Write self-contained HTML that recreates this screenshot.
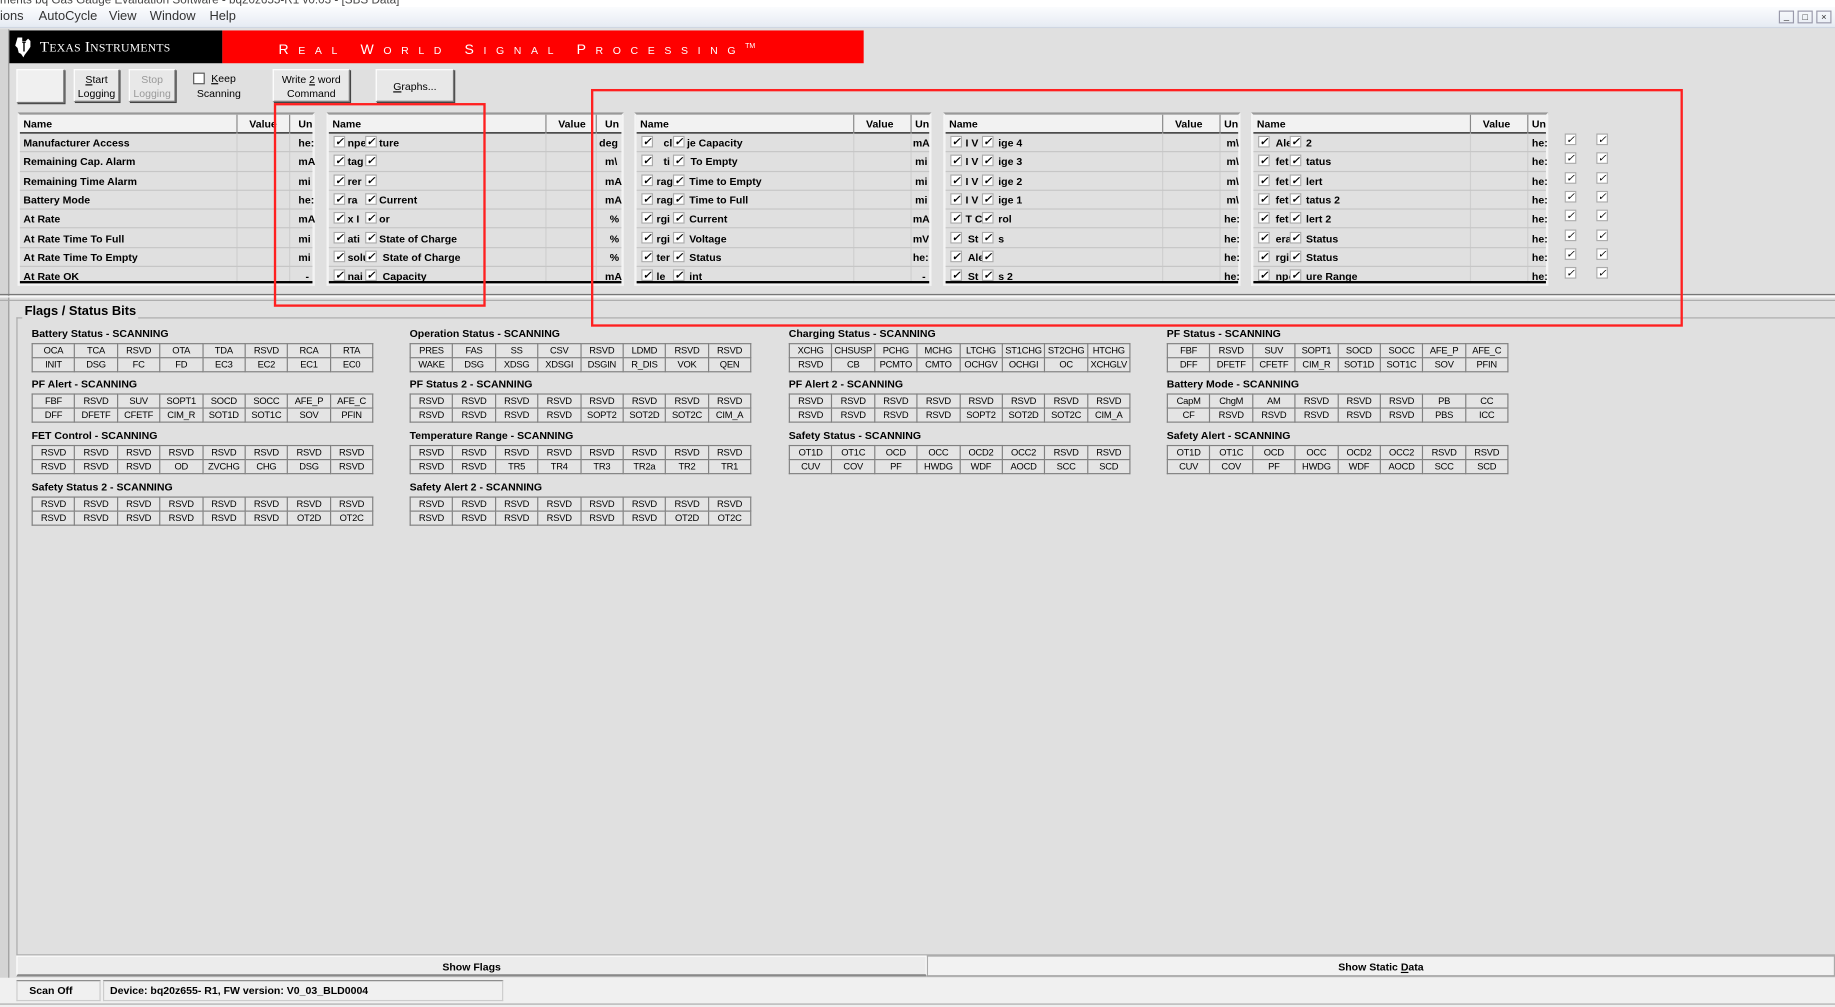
<!DOCTYPE html>
<html><head><meta charset="utf-8"><style>
*{box-sizing:border-box;margin:0;padding:0}
body{width:1835px;height:1007px;overflow:hidden;background:#e0e0e0;font-family:"Liberation Sans",sans-serif}
#s{position:absolute;left:0;top:0;width:1568px;height:860px;transform:scale(1.17028,1.17093);transform-origin:0 0;background:#e0e0e0}
.a{position:absolute}
.menu{left:0;top:6px;width:1568px;height:18px;background:linear-gradient(#fbfcfe,#e6ebf3);font-size:11px;color:#333;border-bottom:1px solid #cfd6e2}
.menu span{position:absolute;top:2px}
.btn{position:absolute;background:#e8e8e8;border:1px solid #fff;border-right-color:#777;border-bottom-color:#777;box-shadow:1px 1px 0 #444;font-size:9px;text-align:center;line-height:12px;color:#000}
.tbl{position:absolute;top:96px;width:254px;height:148px;border:2px solid #f4f4f4;border-top-color:#999;background:#e0e0e0}
.tbl .h{position:absolute;left:0;top:0;height:16px;width:100%;background:#f2f2f2;border-bottom:1px solid #000;font-size:9px;font-weight:bold}
.tbl .h span{position:absolute;top:3px}
.tbl .h i{position:absolute;top:0;width:1px;height:16px;background:#888}
.r{position:absolute;left:0;width:100%;height:16.3px;border-bottom:1px solid #c6c6c6;font-size:9px;font-weight:bold;line-height:16px;white-space:nowrap}
.r span{position:absolute}
.bot{position:absolute;left:0;bottom:0;width:100%;height:2px;background:#000}
.cb{position:absolute;width:10px;height:10px;background:#fff;border:1px solid #aaa;top:2px;font-size:9px;line-height:8px;text-align:center;color:#000}
.vl{position:absolute;top:16px;width:1px;height:128px;background:#cfcfcf}
.fg{position:absolute;font-size:9px;font-weight:bold}
.fg .t{height:13px}
.fg table{border-collapse:collapse;margin-top:0}
.fg td{border:1px solid #808080;width:36.4px;height:12px;font-size:8px;font-weight:normal;text-align:center;line-height:10px;padding:0;background:#e4e4e4;letter-spacing:-.2px}
</style></head><body><div id="s">
<div class="a" style="left:0;top:0;width:1568px;height:6px;background:#fff;overflow:hidden;font-size:10px;line-height:2px;color:#444">ments bq Gas Gauge Evaluation Software - bq20z655-R1 v0.03 - [SBS Data]</div>
<div class="a menu"><span style="left:0">ions</span><span style="left:33px">AutoCycle</span><span style="left:93px">View</span><span style="left:128px">Window</span><span style="left:179px">Help</span>
<span style="left:1520px;top:3px;width:13px;height:11px;border:1px solid #99a;font-size:8px;line-height:8px;text-align:center">_</span><span style="left:1536px;top:3px;width:13px;height:11px;border:1px solid #99a;font-size:8px;line-height:9px;text-align:center">□</span><span style="left:1552px;top:3px;width:13px;height:11px;border:1px solid #99a;font-size:8px;line-height:9px;text-align:center">×</span></div>
<div class="a" style="left:0;top:25px;width:8px;height:835px;background:#d4d4d4;border-right:1px solid #999"></div>
<div class="a" style="left:8px;top:26px;width:182px;height:28px;background:#000;color:#fff;font-family:'Liberation Serif',serif;font-size:13px;line-height:28px;padding-left:26px;letter-spacing:.2px">T<span style="font-size:10px">EXAS</span> I<span style="font-size:10px">NSTRUMENTS</span></div>
<svg class="a" style="left:12px;top:30px" width="16" height="20" viewBox="0 0 16 20"><path d="M3 2h4v3h3l2-2 2 2v5l-2 3-3 4-1 2-2-3-2-1-1-4-2-2z" fill="#fff"/><path d="M7 6h3M8.5 6v8" stroke="#000" stroke-width="1.2"/></svg>
<div class="a" style="left:190px;top:26px;width:548px;height:28px;background:#ff0000;color:#fff;font-size:12px;line-height:28px;padding-left:48px;letter-spacing:8.2px;white-space:nowrap">R<span style="font-size:9px">EAL</span> W<span style="font-size:9px">ORLD</span> S<span style="font-size:9px">IGNAL</span> P<span style="font-size:9px">ROCESSING</span><sup style="font-size:6px;letter-spacing:0">TM</sup></div>
<div class="btn" style="left:14px;top:59px;width:41px;height:29px;background:#f0f0f0"></div>
<div class="btn" style="left:63px;top:59px;width:39px;height:28px;padding-top:2px"><u>S</u>tart<br>Logging</div>
<div class="btn" style="left:110px;top:59px;width:40px;height:28px;padding-top:2px;color:#999">Stop<br>Logging</div>
<div class="a" style="left:165px;top:62px;width:10px;height:10px;background:#fff;border:1px solid #555"></div>
<div class="a" style="left:166px;top:61px;width:40px;font-size:9px;line-height:13px;text-align:center;padding-left:10px"><u>K</u>eep<br><span style="margin-left:-8px">Scanning</span></div>
<div class="btn" style="left:233px;top:59px;width:66px;height:28px;padding-top:2px">Write <u>2</u> word<br>Command</div>
<div class="btn" style="left:321px;top:59px;width:67px;height:28px;line-height:28px"><u>G</u>raphs...</div>

<!-- table 1 -->
<div class="tbl" style="left:15px"><div class="h"><span style="left:3px">Name</span><i style="left:185px"></i><span style="left:196px">Value</span><i style="left:230px"></i><span style="left:238px">Un</span></div>
<div class="vl" style="left:185px"></div><div class="vl" style="left:230px"></div>
<div class="r" style="top:16px"><span style="left:3px">Manufacturer Access</span><span style="left:238px">he:</span></div>
<div class="r" style="top:32.3px"><span style="left:3px">Remaining Cap. Alarm</span><span style="left:238px">mA</span></div>
<div class="r" style="top:48.6px"><span style="left:3px">Remaining Time Alarm</span><span style="left:238px">mi</span></div>
<div class="r" style="top:64.9px"><span style="left:3px">Battery Mode</span><span style="left:238px">he:</span></div>
<div class="r" style="top:81.2px"><span style="left:3px">At Rate</span><span style="left:238px">mA</span></div>
<div class="r" style="top:97.5px"><span style="left:3px">At Rate Time To Full</span><span style="left:238px">mi</span></div>
<div class="r" style="top:113.8px"><span style="left:3px">At Rate Time To Empty</span><span style="left:238px">mi</span></div>
<div class="r" style="top:130.1px;border:0"><span style="left:3px">At Rate OK</span><span style="left:244px">-</span></div>
<div class="bot"></div></div>

<!-- table 2 -->
<div class="tbl" style="left:279px"><div class="h"><span style="left:3px">Name</span><i style="left:185px"></i><span style="left:196px">Value</span><i style="left:228px"></i><span style="left:236px">Un</span></div>
<div class="vl" style="left:185px"></div><div class="vl" style="left:228px"></div>
<div class="r" style="top:16px"><i class="cb" style="left:4px">✓</i><span style="left:16px">npe</span><i class="cb" style="left:31px">✓</i><span style="left:43px">ture</span><span style="left:231px">deg</span></div>
<div class="r" style="top:32.3px"><i class="cb" style="left:4px">✓</i><span style="left:16px">tag</span><i class="cb" style="left:31px">✓</i><span style="left:236px">m\</span></div>
<div class="r" style="top:48.6px"><i class="cb" style="left:4px">✓</i><span style="left:16px">rer</span><i class="cb" style="left:31px">✓</i><span style="left:236px">mA</span></div>
<div class="r" style="top:64.9px"><i class="cb" style="left:4px">✓</i><span style="left:16px">ra</span><i class="cb" style="left:31px">✓</i><span style="left:43px">Current</span><span style="left:236px">mA</span></div>
<div class="r" style="top:81.2px"><i class="cb" style="left:4px">✓</i><span style="left:16px">x I</span><i class="cb" style="left:31px">✓</i><span style="left:43px">or</span><span style="left:240px">%</span></div>
<div class="r" style="top:97.5px"><i class="cb" style="left:4px">✓</i><span style="left:16px">ati</span><i class="cb" style="left:31px">✓</i><span style="left:43px">State of Charge</span><span style="left:240px">%</span></div>
<div class="r" style="top:113.8px"><i class="cb" style="left:4px">✓</i><span style="left:16px">solu</span><i class="cb" style="left:31px">✓</i><span style="left:46px">State of Charge</span><span style="left:240px">%</span></div>
<div class="r" style="top:130.1px;border:0"><i class="cb" style="left:4px">✓</i><span style="left:16px">nai</span><i class="cb" style="left:31px">✓</i><span style="left:46px">Capacity</span><span style="left:236px">mA</span></div>
<div class="bot"></div></div>

<!-- table 3 -->
<div class="tbl" style="left:542px"><div class="h"><span style="left:3px">Name</span><i style="left:185px"></i><span style="left:196px">Value</span><i style="left:234px"></i><span style="left:238px">Un</span></div>
<div class="vl" style="left:185px"></div><div class="vl" style="left:234px"></div>
<div class="r" style="top:16px"><i class="cb" style="left:4px">✓</i><span style="left:23px">cl</span><i class="cb" style="left:31px">✓</i><span style="left:43px">je Capacity</span><span style="left:236px">mA</span></div>
<div class="r" style="top:32.3px"><i class="cb" style="left:4px">✓</i><span style="left:23px">ti</span><i class="cb" style="left:31px">✓</i><span style="left:46px">To Empty</span><span style="left:238px">mi</span></div>
<div class="r" style="top:48.6px"><i class="cb" style="left:4px">✓</i><span style="left:17px">rag</span><i class="cb" style="left:31px">✓</i><span style="left:45px">Time to Empty</span><span style="left:238px">mi</span></div>
<div class="r" style="top:64.9px"><i class="cb" style="left:4px">✓</i><span style="left:17px">rag</span><i class="cb" style="left:31px">✓</i><span style="left:45px">Time to Full</span><span style="left:238px">mi</span></div>
<div class="r" style="top:81.2px"><i class="cb" style="left:4px">✓</i><span style="left:17px">rgi</span><i class="cb" style="left:31px">✓</i><span style="left:45px">Current</span><span style="left:236px">mA</span></div>
<div class="r" style="top:97.5px"><i class="cb" style="left:4px">✓</i><span style="left:17px">rgi</span><i class="cb" style="left:31px">✓</i><span style="left:45px">Voltage</span><span style="left:236px">mV</span></div>
<div class="r" style="top:113.8px"><i class="cb" style="left:4px">✓</i><span style="left:17px">ter</span><i class="cb" style="left:31px">✓</i><span style="left:45px">Status</span><span style="left:236px">he:</span></div>
<div class="r" style="top:130.1px;border:0"><i class="cb" style="left:4px">✓</i><span style="left:17px">le</span><i class="cb" style="left:31px">✓</i><span style="left:45px">int</span><span style="left:244px">-</span></div>
<div class="bot"></div></div>

<!-- table 4 -->
<div class="tbl" style="left:806px"><div class="h"><span style="left:3px">Name</span><i style="left:185px"></i><span style="left:196px">Value</span><i style="left:234px"></i><span style="left:238px">Un</span></div>
<div class="vl" style="left:185px"></div><div class="vl" style="left:234px"></div>
<div class="r" style="top:16px"><i class="cb" style="left:4px">✓</i><span style="left:17px">I V</span><i class="cb" style="left:31px">✓</i><span style="left:45px">ige 4</span><span style="left:240px">m\</span></div>
<div class="r" style="top:32.3px"><i class="cb" style="left:4px">✓</i><span style="left:17px">I V</span><i class="cb" style="left:31px">✓</i><span style="left:45px">ige 3</span><span style="left:240px">m\</span></div>
<div class="r" style="top:48.6px"><i class="cb" style="left:4px">✓</i><span style="left:17px">I V</span><i class="cb" style="left:31px">✓</i><span style="left:45px">ige 2</span><span style="left:240px">m\</span></div>
<div class="r" style="top:64.9px"><i class="cb" style="left:4px">✓</i><span style="left:17px">I V</span><i class="cb" style="left:31px">✓</i><span style="left:45px">ige 1</span><span style="left:240px">m\</span></div>
<div class="r" style="top:81.2px"><i class="cb" style="left:4px">✓</i><span style="left:17px">T C</span><i class="cb" style="left:31px">✓</i><span style="left:45px">rol</span><span style="left:238px">he:</span></div>
<div class="r" style="top:97.5px"><i class="cb" style="left:4px">✓</i><span style="left:19px">St</span><i class="cb" style="left:31px">✓</i><span style="left:45px">s</span><span style="left:238px">he:</span></div>
<div class="r" style="top:113.8px"><i class="cb" style="left:4px">✓</i><span style="left:19px">Ale</span><i class="cb" style="left:31px">✓</i><span style="left:238px">he:</span></div>
<div class="r" style="top:130.1px;border:0"><i class="cb" style="left:4px">✓</i><span style="left:19px">St</span><i class="cb" style="left:31px">✓</i><span style="left:45px">s 2</span><span style="left:238px">he:</span></div>
<div class="bot"></div></div>

<!-- table 5 -->
<div class="tbl" style="left:1069px"><div class="h"><span style="left:3px">Name</span><i style="left:185px"></i><span style="left:196px">Value</span><i style="left:234px"></i><span style="left:238px">Un</span></div>
<div class="vl" style="left:185px"></div><div class="vl" style="left:234px"></div>
<div class="r" style="top:16px"><i class="cb" style="left:4px">✓</i><span style="left:19px">Ale</span><i class="cb" style="left:31px">✓</i><span style="left:45px">2</span><span style="left:238px">he:</span></div>
<div class="r" style="top:32.3px"><i class="cb" style="left:4px">✓</i><span style="left:19px">fet</span><i class="cb" style="left:31px">✓</i><span style="left:45px">tatus</span><span style="left:238px">he:</span></div>
<div class="r" style="top:48.6px"><i class="cb" style="left:4px">✓</i><span style="left:19px">fet</span><i class="cb" style="left:31px">✓</i><span style="left:45px">lert</span><span style="left:238px">he:</span></div>
<div class="r" style="top:64.9px"><i class="cb" style="left:4px">✓</i><span style="left:19px">fet</span><i class="cb" style="left:31px">✓</i><span style="left:45px">tatus 2</span><span style="left:238px">he:</span></div>
<div class="r" style="top:81.2px"><i class="cb" style="left:4px">✓</i><span style="left:19px">fet</span><i class="cb" style="left:31px">✓</i><span style="left:45px">lert 2</span><span style="left:238px">he:</span></div>
<div class="r" style="top:97.5px"><i class="cb" style="left:4px">✓</i><span style="left:19px">era</span><i class="cb" style="left:31px">✓</i><span style="left:45px">Status</span><span style="left:238px">he:</span></div>
<div class="r" style="top:113.8px"><i class="cb" style="left:4px">✓</i><span style="left:19px">rgi</span><i class="cb" style="left:31px">✓</i><span style="left:45px">Status</span><span style="left:238px">he:</span></div>
<div class="r" style="top:130.1px;border:0"><i class="cb" style="left:4px">✓</i><span style="left:19px">npe</span><i class="cb" style="left:31px">✓</i><span style="left:45px">ure Range</span><span style="left:238px">he:</span></div>
<div class="bot"></div></div>

<div class="a" style="left:1337px;top:114px;width:50px;height:130px">
<i class="cb" style="left:0;top:0">✓</i><i class="cb" style="left:27px;top:0">✓</i>
<i class="cb" style="left:0;top:16.3px">✓</i><i class="cb" style="left:27px;top:16.3px">✓</i>
<i class="cb" style="left:0;top:32.6px">✓</i><i class="cb" style="left:27px;top:32.6px">✓</i>
<i class="cb" style="left:0;top:48.9px">✓</i><i class="cb" style="left:27px;top:48.9px">✓</i>
<i class="cb" style="left:0;top:65.2px">✓</i><i class="cb" style="left:27px;top:65.2px">✓</i>
<i class="cb" style="left:0;top:81.5px">✓</i><i class="cb" style="left:27px;top:81.5px">✓</i>
<i class="cb" style="left:0;top:97.8px">✓</i><i class="cb" style="left:27px;top:97.8px">✓</i>
<i class="cb" style="left:0;top:114.1px">✓</i><i class="cb" style="left:27px;top:114.1px">✓</i>
</div>

<div class="a" style="left:0;top:251px;width:1568px;height:3px;border-top:1px solid #777;border-bottom:1px solid #fff"></div>
<div class="a" style="left:0;top:256px;width:1568px;height:1px;background:#aaa"></div>

<!-- flags group -->
<div class="a" style="left:14px;top:271px;width:1560px;height:545px;border:1px solid #aaa;border-right:0"></div>
<div class="a" style="left:19px;top:260px;background:#e0e0e0;font-size:11px;font-weight:bold;padding:0 2px">Flags / Status Bits</div>

<div class="fg" style="left:27px;top:280px"><div class="t">Battery Status - SCANNING</div><table><tr><td>OCA</td><td>TCA</td><td>RSVD</td><td>OTA</td><td>TDA</td><td>RSVD</td><td>RCA</td><td>RTA</td></tr><tr><td>INIT</td><td>DSG</td><td>FC</td><td>FD</td><td>EC3</td><td>EC2</td><td>EC1</td><td>EC0</td></tr></table></div>
<div class="fg" style="left:27px;top:323px"><div class="t">PF Alert - SCANNING</div><table><tr><td>FBF</td><td>RSVD</td><td>SUV</td><td>SOPT1</td><td>SOCD</td><td>SOCC</td><td>AFE_P</td><td>AFE_C</td></tr><tr><td>DFF</td><td>DFETF</td><td>CFETF</td><td>CIM_R</td><td>SOT1D</td><td>SOT1C</td><td>SOV</td><td>PFIN</td></tr></table></div>
<div class="fg" style="left:27px;top:367px"><div class="t">FET Control - SCANNING</div><table><tr><td>RSVD</td><td>RSVD</td><td>RSVD</td><td>RSVD</td><td>RSVD</td><td>RSVD</td><td>RSVD</td><td>RSVD</td></tr><tr><td>RSVD</td><td>RSVD</td><td>RSVD</td><td>OD</td><td>ZVCHG</td><td>CHG</td><td>DSG</td><td>RSVD</td></tr></table></div>
<div class="fg" style="left:27px;top:411px"><div class="t">Safety Status 2 - SCANNING</div><table><tr><td>RSVD</td><td>RSVD</td><td>RSVD</td><td>RSVD</td><td>RSVD</td><td>RSVD</td><td>RSVD</td><td>RSVD</td></tr><tr><td>RSVD</td><td>RSVD</td><td>RSVD</td><td>RSVD</td><td>RSVD</td><td>RSVD</td><td>OT2D</td><td>OT2C</td></tr></table></div>

<div class="fg" style="left:350px;top:280px"><div class="t">Operation Status - SCANNING</div><table><tr><td>PRES</td><td>FAS</td><td>SS</td><td>CSV</td><td>RSVD</td><td>LDMD</td><td>RSVD</td><td>RSVD</td></tr><tr><td>WAKE</td><td>DSG</td><td>XDSG</td><td>XDSGI</td><td>DSGIN</td><td>R_DIS</td><td>VOK</td><td>QEN</td></tr></table></div>
<div class="fg" style="left:350px;top:323px"><div class="t">PF Status 2 - SCANNING</div><table><tr><td>RSVD</td><td>RSVD</td><td>RSVD</td><td>RSVD</td><td>RSVD</td><td>RSVD</td><td>RSVD</td><td>RSVD</td></tr><tr><td>RSVD</td><td>RSVD</td><td>RSVD</td><td>RSVD</td><td>SOPT2</td><td>SOT2D</td><td>SOT2C</td><td>CIM_A</td></tr></table></div>
<div class="fg" style="left:350px;top:367px"><div class="t">Temperature Range - SCANNING</div><table><tr><td>RSVD</td><td>RSVD</td><td>RSVD</td><td>RSVD</td><td>RSVD</td><td>RSVD</td><td>RSVD</td><td>RSVD</td></tr><tr><td>RSVD</td><td>RSVD</td><td>TR5</td><td>TR4</td><td>TR3</td><td>TR2a</td><td>TR2</td><td>TR1</td></tr></table></div>
<div class="fg" style="left:350px;top:411px"><div class="t">Safety Alert 2 - SCANNING</div><table><tr><td>RSVD</td><td>RSVD</td><td>RSVD</td><td>RSVD</td><td>RSVD</td><td>RSVD</td><td>RSVD</td><td>RSVD</td></tr><tr><td>RSVD</td><td>RSVD</td><td>RSVD</td><td>RSVD</td><td>RSVD</td><td>RSVD</td><td>OT2D</td><td>OT2C</td></tr></table></div>

<div class="fg" style="left:674px;top:280px"><div class="t">Charging Status - SCANNING</div><table><tr><td>XCHG</td><td>CHSUSP</td><td>PCHG</td><td>MCHG</td><td>LTCHG</td><td>ST1CHG</td><td>ST2CHG</td><td>HTCHG</td></tr><tr><td>RSVD</td><td>CB</td><td>PCMTO</td><td>CMTO</td><td>OCHGV</td><td>OCHGI</td><td>OC</td><td>XCHGLV</td></tr></table></div>
<div class="fg" style="left:674px;top:323px"><div class="t">PF Alert 2 - SCANNING</div><table><tr><td>RSVD</td><td>RSVD</td><td>RSVD</td><td>RSVD</td><td>RSVD</td><td>RSVD</td><td>RSVD</td><td>RSVD</td></tr><tr><td>RSVD</td><td>RSVD</td><td>RSVD</td><td>RSVD</td><td>SOPT2</td><td>SOT2D</td><td>SOT2C</td><td>CIM_A</td></tr></table></div>
<div class="fg" style="left:674px;top:367px"><div class="t">Safety Status - SCANNING</div><table><tr><td>OT1D</td><td>OT1C</td><td>OCD</td><td>OCC</td><td>OCD2</td><td>OCC2</td><td>RSVD</td><td>RSVD</td></tr><tr><td>CUV</td><td>COV</td><td>PF</td><td>HWDG</td><td>WDF</td><td>AOCD</td><td>SCC</td><td>SCD</td></tr></table></div>

<div class="fg" style="left:997px;top:280px"><div class="t">PF Status - SCANNING</div><table><tr><td>FBF</td><td>RSVD</td><td>SUV</td><td>SOPT1</td><td>SOCD</td><td>SOCC</td><td>AFE_P</td><td>AFE_C</td></tr><tr><td>DFF</td><td>DFETF</td><td>CFETF</td><td>CIM_R</td><td>SOT1D</td><td>SOT1C</td><td>SOV</td><td>PFIN</td></tr></table></div>
<div class="fg" style="left:997px;top:323px"><div class="t">Battery Mode - SCANNING</div><table><tr><td>CapM</td><td>ChgM</td><td>AM</td><td>RSVD</td><td>RSVD</td><td>RSVD</td><td>PB</td><td>CC</td></tr><tr><td>CF</td><td>RSVD</td><td>RSVD</td><td>RSVD</td><td>RSVD</td><td>RSVD</td><td>PBS</td><td>ICC</td></tr></table></div>
<div class="fg" style="left:997px;top:367px"><div class="t">Safety Alert - SCANNING</div><table><tr><td>OT1D</td><td>OT1C</td><td>OCD</td><td>OCC</td><td>OCD2</td><td>OCC2</td><td>RSVD</td><td>RSVD</td></tr><tr><td>CUV</td><td>COV</td><td>PF</td><td>HWDG</td><td>WDF</td><td>AOCD</td><td>SCC</td><td>SCD</td></tr></table></div>

<!-- red boxes -->
<div class="a" style="left:234px;top:88px;width:181px;height:174px;border:2px solid #ff2020"></div>
<div class="a" style="left:505px;top:76px;width:933px;height:203px;border:2px solid #ff2020"></div>

<!-- bottom tabs -->
<div class="a" style="left:14px;top:816px;width:778px;height:18px;background:#ececec;border:1px solid #fff;border-bottom:2px solid #888;font-size:9px;font-weight:bold;text-align:center;line-height:18px">Show Flags</div>
<div class="a" style="left:792px;top:816px;width:776px;height:18px;background:#f2f2f2;border:1px solid #aaa;border-bottom-color:#888;font-size:9px;font-weight:bold;text-align:center;line-height:18px">Show Static <u>D</u>ata</div>
<div class="a" style="left:0;top:835px;width:1568px;height:25px;background:#f0f0f0"></div>
<div class="a" style="left:14px;top:837px;width:72px;height:18px;border:1px solid #ccc;border-top-color:#888;font-size:9px;font-weight:bold;line-height:17px;padding-left:10px">Scan Off</div>
<div class="a" style="left:88px;top:837px;width:342px;height:18px;border:1px solid #ccc;border-top-color:#888;font-size:9px;font-weight:bold;line-height:17px;padding-left:5px">Device: bq20z655- R1, FW version: V0_03_BLD0004</div>
<div class="a" style="left:0;top:857px;width:1568px;height:3px;border-top:1px solid #aaa"></div>
</div></body></html>
